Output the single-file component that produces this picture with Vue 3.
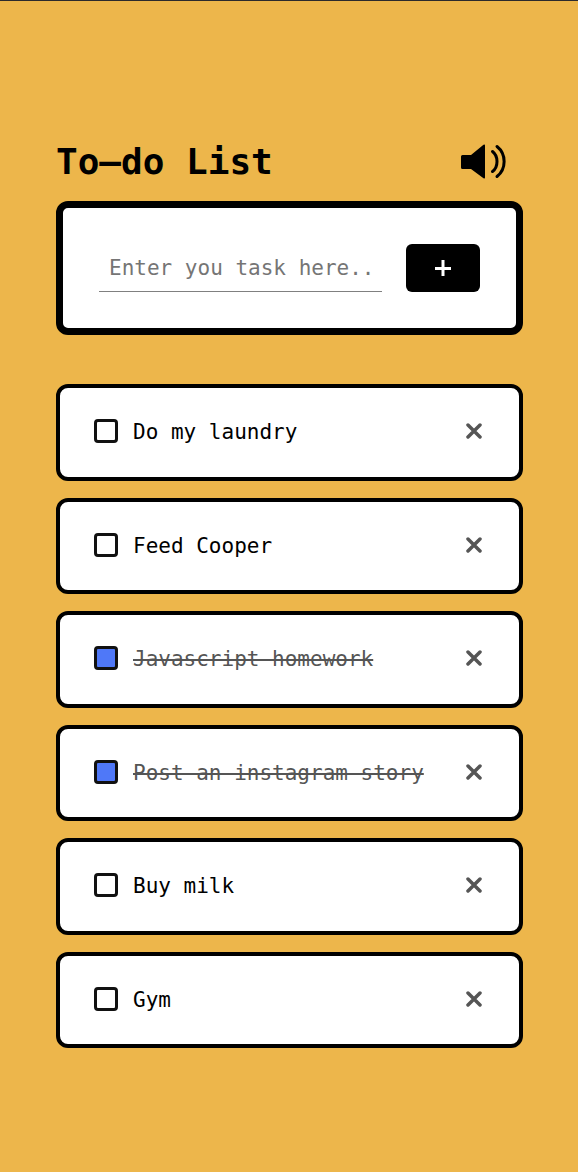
<script setup>
import { ref } from 'vue'

const draft = ref('')
const soundOn = ref(true)
const tasks = ref([
  { id: 1, text: 'Do my laundry', done: false },
  { id: 2, text: 'Feed Cooper', done: false },
  { id: 3, text: 'Javascript homework', done: true },
  { id: 4, text: 'Post an instagram story', done: true },
  { id: 5, text: 'Buy milk', done: false },
  { id: 6, text: 'Gym', done: false },
])
let nextId = 7

function addTask() {
  const text = draft.value.trim()
  if (!text) return
  tasks.value.push({ id: nextId++, text, done: false })
  draft.value = ''
}

function removeTask(id) {
  tasks.value = tasks.value.filter((task) => task.id !== id)
}
</script>

<template>
  <main class="page">
    <header class="header">
      <h1 class="title">To–do List</h1>
      <button class="sound" type="button" aria-label="Sound" :aria-pressed="soundOn" @click="soundOn = !soundOn">
        <svg viewBox="0 0 48 38" width="48" height="38" aria-hidden="true">
          <path d="M3.5 12H12L24.5 1.800Q26 0.800 26 2.500V34.500Q26 36.200 24.500 35.200L12 26H3.500Q2 26 2 24.500V13.500Q2 12 3.500 12Z" />
          <g v-if="soundOn" class="waves">
            <path d="M33.500 8.500C39.500 13 39.500 24 33.500 28.500" />
            <path d="M38 3.500C47.500 11 47.500 26 38 33.500" />
          </g>
        </svg>
      </button>
    </header>

    <form class="entry" @submit.prevent="addTask">
      <input v-model="draft" class="field" type="text" aria-label="New task" placeholder="Enter you task here.." />
      <button class="add" type="submit" aria-label="Add task">
        <svg viewBox="0 0 16 16" width="16" height="16" aria-hidden="true"><path d="M8 0V16M0 8.500H16" /></svg>
      </button>
    </form>

    <ul class="list">
      <li v-for="task in tasks" :key="task.id" class="task">
        <input :id="`task-${task.id}`" v-model="task.done" class="check" type="checkbox" />
        <label class="text" :class="{ done: task.done }" :for="`task-${task.id}`">{{ task.text }}</label>
        <button class="remove" type="button" :aria-label="`Remove ${task.text}`" @click="removeTask(task.id)">
          <svg viewBox="0 0 16 16" width="16" height="16" aria-hidden="true"><path d="M2 2L14 14M14 2L2 14" /></svg>
        </button>
      </li>
    </ul>
  </main>
</template>

<style>
body {
  background: #edb64b;
}
</style>

<style scoped>
.page {
  box-sizing: border-box;
  display: flex;
  flex-direction: column;
  min-height: 100vh;
  padding: 139px 55px 124px 56px;
  border-top: 1px solid #2c2a2c;
  background: #edb64b;
  color: #000;
  font-family: "DejaVu Sans Mono", monospace;
  font-size: 21px;
}

button {
  display: flex;
  align-items: center;
  justify-content: center;
  padding: 0;
  border: 0;
  background: none;
  cursor: pointer;
}

.header {
  display: flex;
  align-items: center;
  justify-content: space-between;
  height: 44px;
  margin-bottom: 17px;
  padding-right: 16px;
}

.title {
  margin: 0;
  font-size: 36px;
  line-height: 44px;
}

.waves {
  fill: none;
  stroke: #000;
  stroke-width: 3;
  stroke-linecap: round;
}

.entry {
  display: flex;
  gap: 24px;
  padding: 36px;
  border: 7px solid #000;
  border-radius: 12px;
  background: #fff;
}

.field {
  box-sizing: border-box;
  flex: 1;
  min-width: 0;
  height: 48px;
  padding: 0 10px;
  border: 0;
  border-bottom: 1px solid #808080;
  outline: 0;
  background: none;
  color: #000;
  font: inherit;
}

.field::placeholder {
  color: #757575;
  opacity: 1;
}

.add {
  width: 74px;
  height: 48px;
  border-radius: 6px;
  background: #000;
}

.add path {
  stroke: #fff;
  stroke-width: 3;
}

.list {
  display: grid;
  flex: 1;
  grid-auto-rows: 1fr;
  gap: 17px;
  margin: 49px 0 0;
  padding: 0;
  list-style: none;
}

.task {
  display: flex;
  align-items: center;
  padding: 0 37px 2px 34px;
  border: 4px solid #000;
  border-radius: 12px;
  background: #fff;
}

.check {
  appearance: none;
  box-sizing: border-box;
  flex: none;
  width: 24px;
  height: 24px;
  margin: 0 15px 0 0;
  border: 3px solid #111;
  border-radius: 4px;
  background: #fff;
}

.check:checked {
  background: #4f78f8;
}

.text {
  flex: 1;
  padding-top: 2px;
  line-height: 26px;
}

.done {
  color: #555;
  text-decoration: line-through;
}

.remove path {
  fill: none;
  stroke: #555;
  stroke-width: 3.5;
  stroke-linecap: round;
}
</style>
